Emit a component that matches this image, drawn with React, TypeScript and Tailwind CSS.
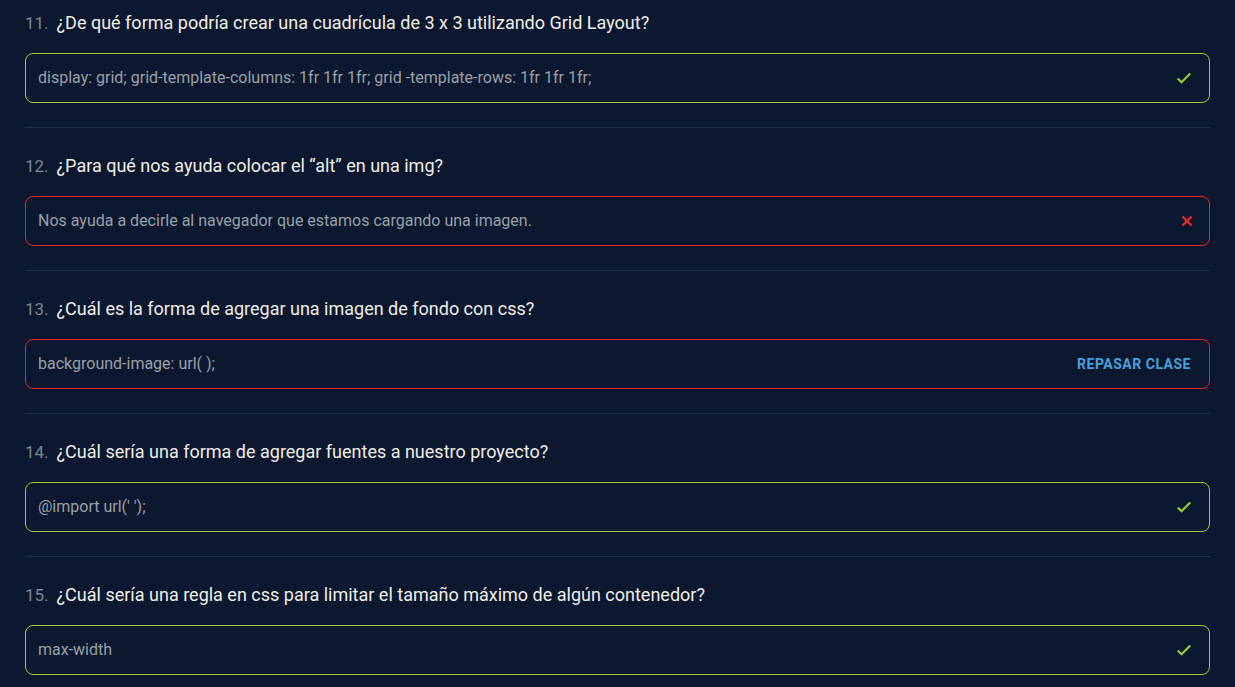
import React from "react";

type Status = "ok" | "bad" | "review";

const items: { n: number; q: string; a: string; s: Status }[] = [
  { n: 11, q: "¿De qué forma podría crear una cuadrícula de 3 x 3 utilizando Grid Layout?", a: "display: grid; grid-template-columns: 1fr 1fr 1fr; grid -template-rows: 1fr 1fr 1fr;", s: "ok" },
  { n: 12, q: "¿Para qué nos ayuda colocar el “alt” en una img?", a: "Nos ayuda a decirle al navegador que estamos cargando una imagen.", s: "bad" },
  { n: 13, q: "¿Cuál es la forma de agregar una imagen de fondo con css?", a: "background-image: url( );", s: "review" },
  { n: 14, q: "¿Cuál sería una forma de agregar fuentes a nuestro proyecto?", a: "@import url(' ');", s: "ok" },
  { n: 15, q: "¿Cuál sería una regla en css para limitar el tamaño máximo de algún contenedor?", a: "max-width", s: "ok" },
];

function Check() {
  return (
    <svg width="20" height="20" viewBox="0 0 24 24" fill="none">
      <path d="M4.5 12.5l4.5 4.5L19.5 6.5" stroke="#9cc83a" strokeWidth="2.6" />
    </svg>
  );
}

function Cross() {
  return (
    <svg width="12" height="12" viewBox="0 0 12 12" fill="none">
      <path d="M1.5 1.5l9 9M10.5 1.5l-9 9" stroke="#e8282b" strokeWidth="2.4" />
    </svg>
  );
}

export default function App() {
  return (
    <div className="min-h-[687px] bg-[#0b182f] px-[25px] pt-[11px]" style={{ fontFamily: "Roboto, 'Liberation Sans', sans-serif" }}>
      {items.map((it, i) => (
        <div key={it.n}>
          <div className="flex items-center h-[24px] text-[18px] leading-[24px]">
            <span className="text-[#7b8592] text-[17px] mr-[8px]">{it.n}.</span>
            <span className="text-[#f1ede6]">{it.q}</span>
          </div>
          <div
            className={`mt-[18px] h-[50px] rounded-[8px] border flex items-center justify-between pl-[12px] ${
              it.s === "ok" ? "border-[#a2c83a]" : "border-[#e3282c]"
            } ${it.s === "review" ? "pr-[18px]" : "pr-[15px]"}`}
          >
            <span className="text-[#9aa0a8] text-[16px]">{it.a}</span>
            {it.s === "ok" && <Check />}
            {it.s === "bad" && (
              <span className="mr-[1px] flex"><Cross /></span>
            )}
            {it.s === "review" && (
              <span className="text-[#47a0dc] text-[14px] font-bold tracking-[0.5px]">REPASAR CLASE</span>
            )}
          </div>
          {i < items.length - 1 && <div className="mt-[24px] mb-[26px] h-px bg-[#1d2e44]" />}
        </div>
      ))}
    </div>
  );
}
